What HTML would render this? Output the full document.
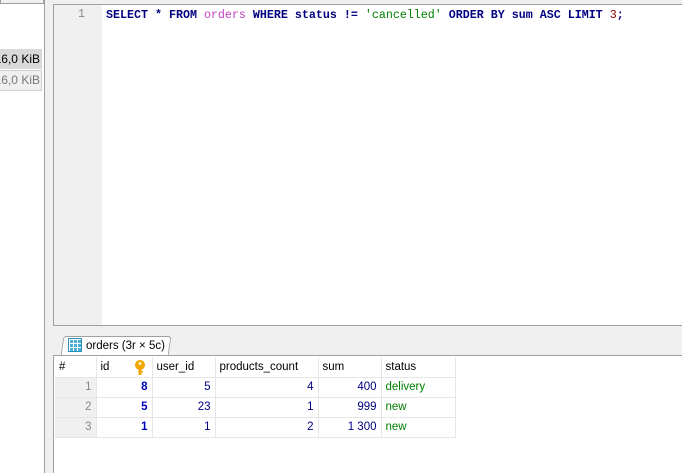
<!DOCTYPE html>
<html><head><style>
body{margin:0;width:682px;height:473px;background:#f0f0f0;position:relative;overflow:hidden;font-family:"Liberation Sans",sans-serif;}
.abs{position:absolute}
#left{left:0;top:0;width:44px;height:473px;background:#fff;border-right:1px solid #a0a0a0}
#ed{left:53px;top:4px;width:629px;height:322px;background:#fff;border:1px solid #a0a0a0;border-right:none;box-sizing:border-box}
#gut{left:54px;top:5px;width:48px;height:320px;background:#f0f0f0}
.sql{font-family:"Liberation Mono",monospace;font-size:11.67px;white-space:pre;color:#000080;font-weight:bold}
#grid{left:53px;top:355px;width:629px;height:118px;background:#fff;border-top:1px solid #a0a0a0;border-left:1px solid #a0a0a0;box-sizing:border-box}
table{border-collapse:collapse;font-size:11.5px;position:absolute;left:55px;top:357px;table-layout:fixed}
td{height:20px;padding:0 4px;border-right:1px solid #e6e6e6;border-bottom:1px solid #e6e6e6;white-space:nowrap;color:#000;overflow:hidden;box-sizing:border-box}
td.n{color:#888;text-align:right;background:#f0f0f0}
td.r{text-align:right;color:#000080}
td.g{color:#008000}
.kib{white-space:nowrap;overflow:hidden;font-size:12px;display:flex;justify-content:flex-end}
</style></head><body>
<div id="left" class="abs"></div>
<div class="abs" style="left:0;top:0;width:42px;height:3px;border:1px solid #a0a0a0;border-top:none;background:#f0f0f0"></div>
<div class="abs kib" style="left:0;top:49px;width:40px;padding-right:2px;height:20px;background:#d9d9d9;line-height:20px;color:#000"><span>16,0&nbsp;KiB</span></div>
<div class="abs kib" style="left:-1px;top:70px;width:40px;padding-right:1px;height:19px;background:#f0f0f0;border:1px solid #d0d0d0;line-height:19px;color:#777"><span>16,0&nbsp;KiB</span></div>
<div id="ed" class="abs"></div>
<div id="gut" class="abs"></div>
<div class="abs" style="left:78px;top:8px;font-size:11.5px;color:#888;font-family:'Liberation Mono',monospace">1</div>
<div class="abs sql" style="left:106px;top:8px">SELECT * FROM <span style="color:#c040c0;font-weight:normal">orders</span> WHERE status != <span style="color:#008000;font-weight:normal">'cancelled'</span> ORDER BY sum ASC LIMIT <span style="color:#800000;font-weight:normal">3</span>;</div>
<div class="abs" style="left:62px;top:336px;width:106px;height:19px;background:#fff;border:1px solid #a0a0a0;border-bottom:none;border-radius:3px 3px 0 0;transform:skewX(-8deg)"></div>
<div class="abs" style="left:68px;top:338px;width:14px;height:14px;background:#4ab0d8;border:1px solid #2a90b8;box-sizing:border-box;background-image:linear-gradient(#fff 1px,transparent 1px),linear-gradient(90deg,#fff 1px,transparent 1px);background-size:4px 4px"></div>
<div class="abs" style="left:86px;top:340px;font-size:11.5px;color:#000">orders (3r × 5c)</div>
<div id="grid" class="abs"></div>
<table>
<colgroup><col style="width:41px"><col style="width:56px"><col style="width:63px"><col style="width:103px"><col style="width:63px"><col style="width:74px"></colgroup>
<tr><td>#</td><td style="position:relative">id <svg style="position:absolute;left:37px;top:3px" width="12" height="15" viewBox="0 0 12 15"><circle cx="6" cy="5" r="5" fill="#f0a800"/><circle cx="6" cy="3.5" r="1.5" fill="#fff3c0"/><rect x="4.5" y="8" width="3" height="7" fill="#f0a800"/><rect x="7" y="11" width="2" height="1.5" fill="#f0a800"/></svg></td><td>user_id</td><td>products_count</td><td>sum</td><td>status</td></tr>
<tr><td class="n">1</td><td class="r"><b style="color:#0000c0">8</b></td><td class="r">5</td><td class="r">4</td><td class="r">400</td><td class="g">delivery</td></tr>
<tr><td class="n">2</td><td class="r"><b style="color:#0000c0">5</b></td><td class="r">23</td><td class="r">1</td><td class="r">999</td><td class="g">new</td></tr>
<tr><td class="n">3</td><td class="r"><b style="color:#0000c0">1</b></td><td class="r">1</td><td class="r">2</td><td class="r">1 300</td><td class="g">new</td></tr>
</table>
</body></html>
